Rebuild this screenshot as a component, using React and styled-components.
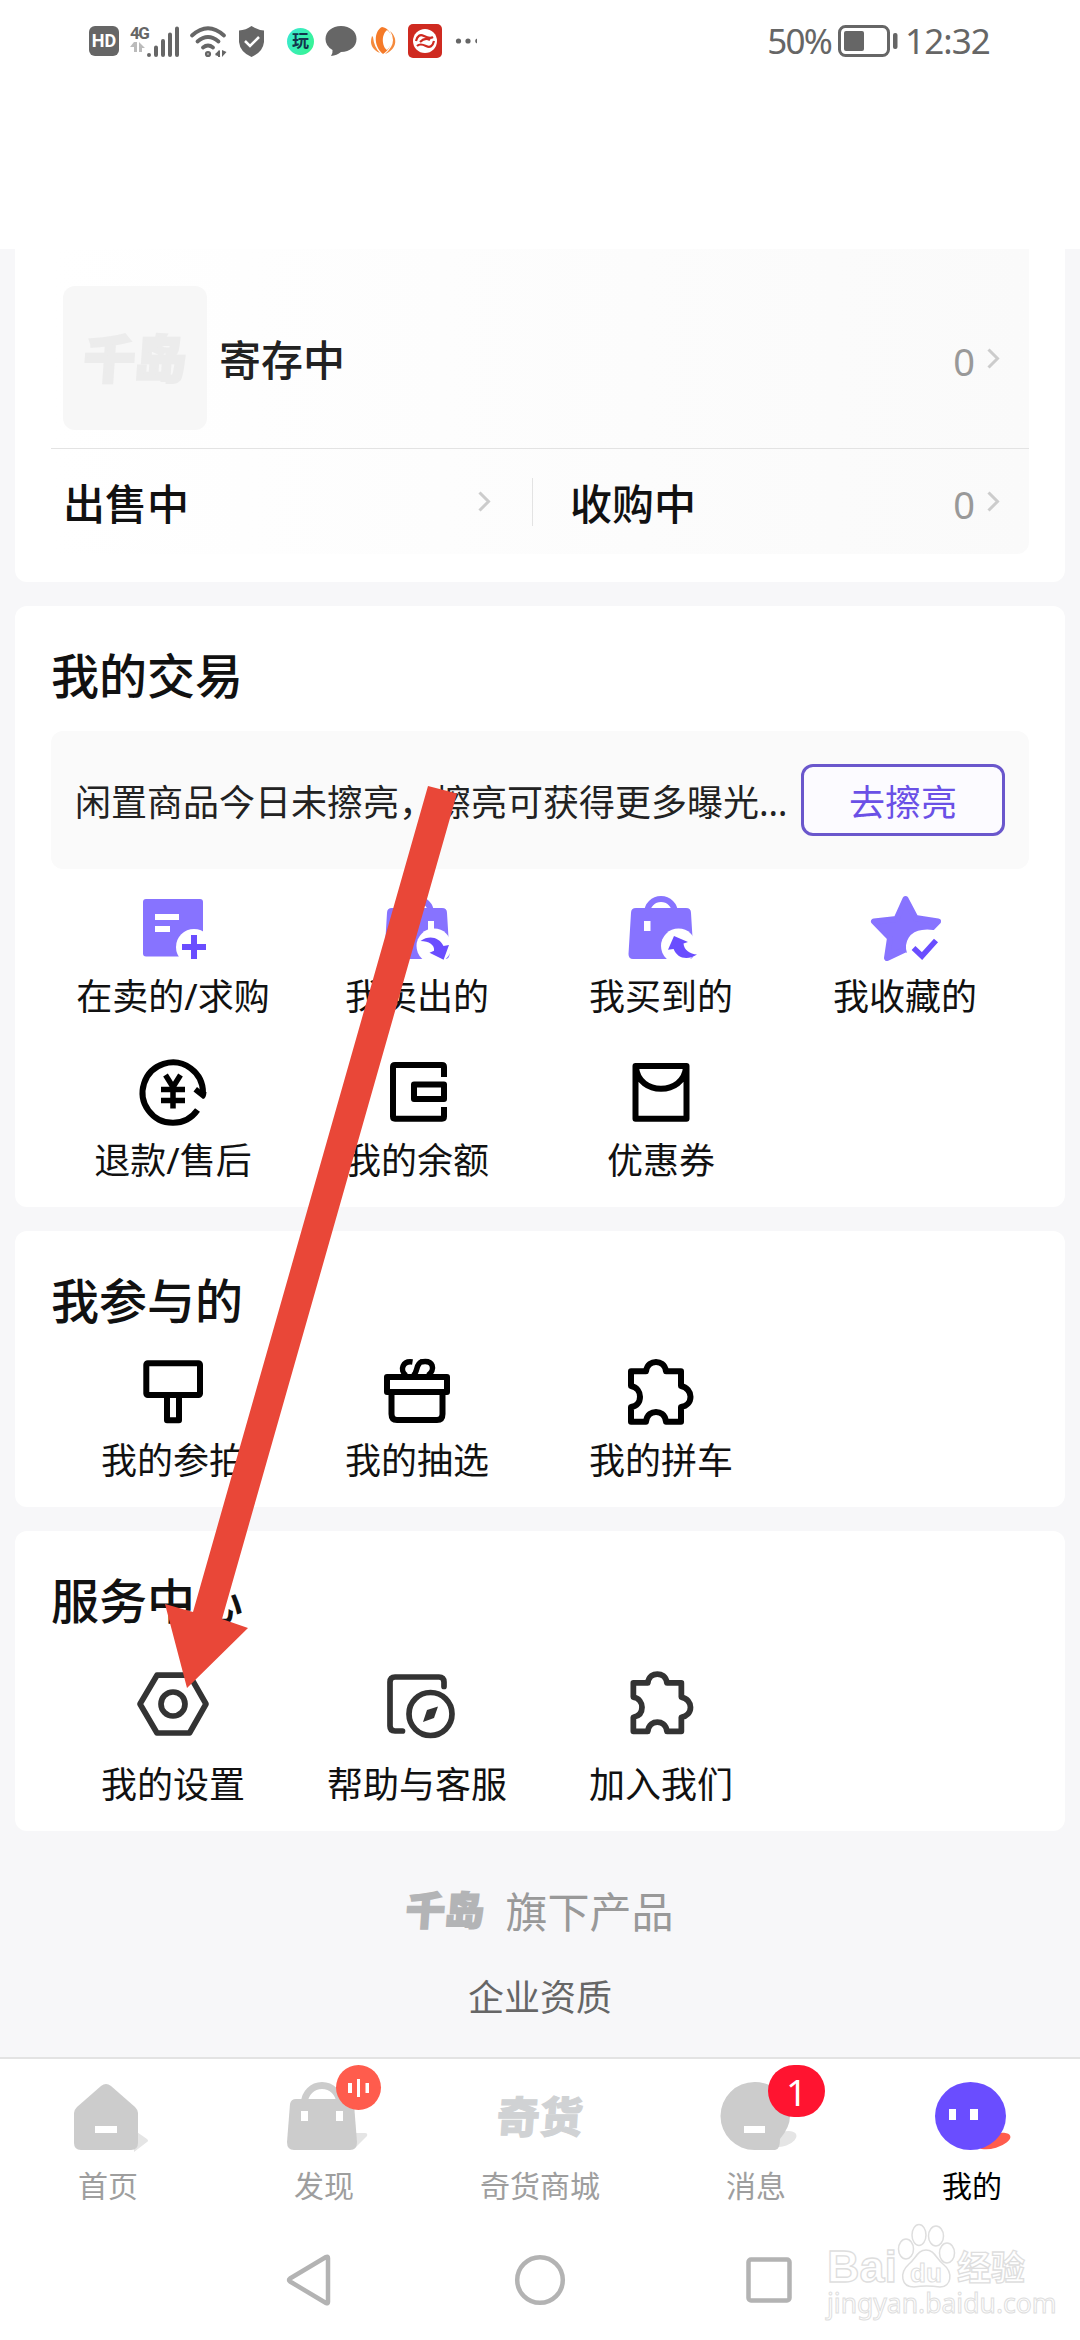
import React from 'react'
import styled, { createGlobalStyle } from 'styled-components'

const GlobalStyle = createGlobalStyle`
  * { box-sizing: border-box; }
  body {
    margin: 0;
    background: #fff;
    font-family: "Noto Sans", "Noto Sans CJK SC", sans-serif;
    color: #111;
  }
  svg { display: block; overflow: visible; flex: none; }
`

/* ---------- icons ---------- */

const Icon72 = ({ children }) => (
  <svg width="72" height="72" viewBox="0 0 72 72" fill="none">{children}</svg>
)

const SellingIcon = () => (
  <Icon72>
    <rect x="6" y="7" width="60" height="57.5" rx="3" fill="#8773ff" />
    <path d="M18 22h24v6H18zM18 34h15v6H18z" fill="#fff" />
    <circle cx="57" cy="55" r="18" fill="#fff" />
    <path d="M54 43h6v9h9v6h-9v9h-6v-9h-9v-6h9z" fill="#6a4dff" />
  </Icon72>
)

const SoldIcon = () => (
  <Icon72>
    <circle cx="36" cy="21" r="14" stroke="#8773ff" strokeWidth="6" />
    <path d="M11 16H61Q66 16 66 21L68.500 62Q68.500 67 64 67H8Q3.500 67 3.500 62L6 21Q6 16 11 16Z" fill="#8773ff" />
    <rect x="47" y="29" width="6" height="10" fill="#fff" />
    <circle cx="53" cy="54" r="17.500" fill="#fff" />
    <path d="M39.500 49C48 43 58 45 62.500 54L68 53L62.600 67.700L48.500 60.700L53 58.700C54 53 48 49 39.500 49Z" fill="#6a4dff" />
  </Icon72>
)

const BoughtIcon = () => (
  <Icon72>
    <circle cx="36" cy="21" r="14" stroke="#8773ff" strokeWidth="6" />
    <path d="M11 16H61Q66 16 66 21L68.500 62Q68.500 67 64 67H8Q3.500 67 3.500 62L6 21Q6 16 11 16Z" fill="#8773ff" />
    <rect x="19" y="29" width="6.500" height="10" fill="#fff" />
    <circle cx="53.500" cy="54" r="17.500" fill="#fff" />
    <path d="M49 44L63 50L58.500 51.500C59 58 65 62 72 62.500C62 69 52 66 48.600 57L43 57.700Z" fill="#6a4dff" />
  </Icon72>
)

const FavIcon = () => (
  <Icon72>
    <path d="M36.500 7L46.500 26L69 29.500L53 46L56 66L37 57L18 66L21 46L5 29.500L27.500 27Z" fill="#8773ff" stroke="#8773ff" strokeWidth="6" strokeLinejoin="round" />
    <path d="M53 38A17 17 0 0 0 38 61L40 76H78V38H64Q58 37 53 38Z" fill="#fff" />
    <path d="M44.500 56L53 64L67 48.500" stroke="#6a4dff" strokeWidth="5.500" />
  </Icon72>
)

const RefundIcon = () => (
  <Icon72>
    <path d="M60.500 54A30.200 30.200 0 1 1 66 37" stroke="#000" strokeWidth="6" />
    <path d="M60 31L56.500 35.500L66 43Q69 43 69.500 36L66 36Z" fill="#000" />
    <path d="M28.500 19L36 31L43.500 19M36 30V52.500M24 33.500H48M24 44.500H48" stroke="#000" strokeWidth="5.500" />
  </Icon72>
)

const BalanceIcon = () => (
  <Icon72>
    <path d="M63 21V11Q63 9 61 9H14Q12 9 12 11V60.500Q12 62.700 14 62.700H61Q63 62.700 63 60.500V51M33 28.500H63V43H33Z" stroke="#000" strokeWidth="6" strokeLinejoin="round" />
  </Icon72>
)

const CouponIcon = () => (
  <Icon72>
    <path d="M10.500 10H61.500V62.700H10.500ZM11 11C13 40 59 40 61 11" stroke="#000" strokeWidth="6" strokeLinejoin="round" />
  </Icon72>
)

const AuctionIcon = () => (
  <Icon72>
    <rect x="9.300" y="7.300" width="53.700" height="31.700" rx="1.500" stroke="#000" strokeWidth="6" />
    <path d="M30 40V64.300H42V40" stroke="#000" strokeWidth="6" strokeLinejoin="round" />
  </Icon72>
)

const DrawIcon = () => (
  <Icon72>
    <path d="M6 21H66V36H6ZM10.500 38V58Q10.500 64 16 64H56Q61.500 64 61.500 58V38" stroke="#000" strokeWidth="6" strokeLinejoin="round" />
    <path d="M31.500 6C22 4.500 18 14 25 19.500M39.500 6C53 3 54.500 14 47 19.500M32 19.500C37.500 16 34 8 41 5.700" stroke="#000" strokeWidth="5.500" />
  </Icon72>
)

const PuzzleIcon = ({ color = '#000', small }) => (
  <Icon72>
    <path
      transform={small ? 'translate(2.6 .3) scale(.96)' : undefined}
      d="M6 15.300H21C22 8 27 6 31 6C35 6 40 8 41 15.300H56V30C62 31 65.500 36 65.500 40.700C65.500 46 62 50 56 51V65.700H41C40 58 35 56 31 56C27 56 22 58 21 65.700H6V51C12 50 15 46 15 40.700C15 36 12 31 6 30Z"
      stroke={color}
      strokeWidth="6"
      strokeLinejoin="round"
    />
  </Icon72>
)

const SettingIcon = () => (
  <Icon72>
    <path d="M3 36L20 7.200H52.500L69 36L52.500 65H20Z" stroke="#333" strokeWidth="5.700" strokeLinejoin="round" />
    <circle cx="36" cy="36" r="12" stroke="#333" strokeWidth="5.700" />
  </Icon72>
)

const HelpIcon = () => (
  <Icon72>
    <path d="M63 18.500V14Q63 9 58 9H14Q9 9 9 14V58Q9 63 14 63H21.500" stroke="#333" strokeWidth="5.700" strokeLinecap="round" />
    <circle cx="49.500" cy="46" r="21.500" stroke="#333" strokeWidth="5.700" />
    <path d="M57 38.500L46 42L42 54L53 50Z" fill="#333" />
  </Icon72>
)

const Chevron = () => (
  <svg width="12" height="21" viewBox="0 0 12 21" fill="none">
    <path d="M1.500 1.500L10.500 10.500L1.500 19.500" stroke="#ccc" strokeWidth="3" />
  </svg>
)

/* ---------- status bar ---------- */

const StatusBar = styled.header`
  height: 249px;
  padding: 0 90px 0 89px;
  background: #fff;
  display: flex;
  justify-content: space-between;
  align-items: flex-start;
`
const StatusGroup = styled.div`
  height: 82px;
  display: flex;
  align-items: center;
  gap: ${(p) => p.$gap || 0}px;
  color: #666;
`
const HdBox = styled.div`
  width: 30px;
  height: 30px;
  border-radius: 6px;
  background: #666;
  color: #fff;
  font: 700 18px/30px "Roboto", sans-serif;
  text-align: center;
`
const Signal = styled.div`
  display: flex;
  align-items: flex-end;
  height: 32px;
`
const NetType = styled.div`
  width: 17px;
  height: 32px;
  font: 700 17px/17px "Roboto", sans-serif;
  letter-spacing: -1.5px;
`
const StatusText = styled.span`
  font-size: 35px;
  line-height: 40px;
  letter-spacing: ${(p) => p.$spacing}px;
`
const PlayBadge = styled.div`
  width: 27px;
  height: 27px;
  border-radius: 50%;
  background: linear-gradient(120deg, #3be8d8, #37f58a);
  color: #12344d;
  font-size: 17px;
  font-weight: 700;
  line-height: 26px;
  text-align: center;
`

const Status = () => (
  <StatusBar>
    <StatusGroup $gap={11}>
      <HdBox>HD</HdBox>
      <Signal>
        <NetType>
          4G
          <svg width="16" height="10" viewBox="0 0 16 10" fill="#bbb">
            <path d="M4 0H7V10H4V5H0ZM9 0L15 6H12V10H9Z" />
          </svg>
        </NetType>
        <svg width="32" height="31" viewBox="0 0 32 31" stroke="#666" strokeWidth="4" strokeLinecap="round">
          <path d="M2 29V29.100M9 21.500V29M16 15V29M23 8.500V29M30 2.500V29" />
        </svg>
      </Signal>
      <svg width="37" height="31" viewBox="0 0 37 31" fill="none" stroke="#666" strokeWidth="3.800" strokeLinecap="round">
        <path d="M2 9.500Q18 -5 34 9.500M7.500 15.500Q18 6.500 28.500 15.500M13 21.500Q18 17.500 23 21.500" />
        <circle cx="18" cy="28" r="1.200" />
        <path d="M25 29L29 24V31H30.500M32 24V31L36.500 26Z" fill="#666" stroke="none" />
        <path d="M30 24V31H28V28H25Z" fill="#666" stroke="none" />
      </svg>
      <svg width="27" height="31" viewBox="0 0 27 31" fill="none">
        <path d="M13.500 0Q20 4 26 4.500V16Q25 26 13.500 31Q2 26 1 16V4.500Q8 4 13.500 0Z" fill="#666" />
        <path d="M7 15L12 20L21 11" stroke="#fff" strokeWidth="2.500" />
      </svg>
      <svg width="0" height="1" />
      <PlayBadge>玩</PlayBadge>
      <svg width="32" height="30" viewBox="0 0 32 30">
        <path d="M16 0C25 0 31.500 5.500 31.500 13S25 26 16 26Q12 29.500 6 30Q8 27 7.500 24Q.5 20 .5 13C.5 5.500 7 0 16 0Z" fill="#666" />
      </svg>
      <svg width="29" height="28" viewBox="0 0 29 28">
        <path d="M14 0C6 4 5 19 15 27C27 20 25 1 14 0Z" fill="#f57a28" />
        <path d="M19 3C12 9 15 21 19 23C26 17 25 7 19 3Z" fill="#fff" />
        <path d="M22 4C31 12 28 23 17 27Q25 20 25 13Q25 8 22 4ZM4 9Q0 21 12 26Q6 20 5 10Z" fill="#f58a3c" />
      </svg>
      <svg width="34" height="34" viewBox="0 0 34 34" fill="none">
        <rect width="34" height="34" rx="5" fill="#cf2a20" />
        <circle cx="17" cy="17" r="12" fill="#fff" />
        <path d="M8 17Q10 9 16 12T25 13M26 17Q24 25 18 22T9 22M12 18Q17 13 22 16" stroke="#cf2a20" strokeWidth="2.200" />
      </svg>
      <svg width="24" height="6" viewBox="0 0 24 6" fill="#666">
        <circle cx="5.500" cy="3" r="2.600" />
        <circle cx="15" cy="3" r="2.600" />
        <path d="M24 .5A2.600 2.600 0 0 0 24 5.500Z" />
      </svg>
    </StatusGroup>
    <StatusGroup $gap={7}>
      <StatusText $spacing={-1.8}>50%</StatusText>
      <svg width="60" height="32" viewBox="0 0 60 32" fill="none">
        <rect x="1.500" y="1.500" width="49" height="29" rx="6" stroke="#666" strokeWidth="3" />
        <rect x="6" y="6" width="20" height="20" rx="2" fill="#666" />
        <rect x="55" y="8" width="4.500" height="16" rx="2" fill="#666" />
      </svg>
      <StatusText $spacing={-0.9}>12:32</StatusText>
    </StatusGroup>
  </StatusBar>
)

/* ---------- content ---------- */

const Content = styled.main`
  height: 1808px;
  padding: 0 15px;
  background: #f7f7f9;
  display: flex;
  flex-direction: column;
  gap: 24px;
`
const Card = styled.section`
  height: ${(p) => p.$height}px;
  padding: 0 36px;
  background: #fff;
  border-radius: ${(p) => (p.$flushTop ? '0 0 12px 12px' : '12px')};
  flex: none;
`
const Title = styled.h2`
  margin: 0;
  padding-top: 35px;
  font-size: 48px;
  font-weight: 500;
  line-height: 70px;
  color: #111;
`
const AssetPanel = styled.div`
  height: 305px;
  border-radius: 0 0 12px 12px;
  background: linear-gradient(90deg, #fff, #fafafa);
`
const AssetTop = styled.div`
  height: 200px;
  padding: 37px 30px 18px 12px;
  border-bottom: 1px solid #e3e3e3;
  display: flex;
  align-items: center;
`
const Thumb = styled.div`
  width: 144px;
  height: 144px;
  margin-right: 12px;
  border-radius: 12px;
  background: #f7f7f7;
  display: flex;
  align-items: center;
  justify-content: center;
`
const Brand = styled.span`
  font-size: ${(p) => p.$size}px;
  line-height: 1;
  font-weight: 900;
  color: ${(p) => p.$color};
  -webkit-text-stroke: ${(p) => p.$stroke}px ${(p) => p.$color};
  transform: skewX(-4deg);
`
const AssetBottom = styled.div`
  height: 105px;
  display: flex;
  align-items: center;
`
const AssetCell = styled.div`
  flex: ${(p) => (p.$first ? '0 0 482px' : '1')};
  height: 48px;
  padding: ${(p) => (p.$first ? '0 42px 0 12px' : '0 30px 0 37px')};
  border-right: ${(p) => (p.$first ? '1px solid #e3e3e3' : 'none')};
  display: flex;
  align-items: center;
`
const AssetName = styled.span`
  flex: 1;
  font-size: 42px;
  font-weight: 500;
  line-height: 48px;
  padding-top: 4px;
  color: ${(p) => (p.$soft ? '#222' : '#111')};
`
const Count = styled.span`
  margin-right: 12px;
  padding-top: 5px;
  font-size: 38px;
  line-height: 48px;
  color: #999;
`
const Notice = styled.div`
  height: 138px;
  margin-top: 20px;
  padding: 0 24px;
  border-radius: 12px;
  background: #fafafa;
  display: flex;
  align-items: center;
  justify-content: space-between;
  font-size: 36px;
  color: #222;
  white-space: nowrap;
`
const PolishButton = styled.button`
  width: 204px;
  height: 72px;
  padding: 0;
  border: 3px solid #6a57cc;
  border-radius: 12px;
  background: #fcfbff;
  font: inherit;
  color: #6a50e6;
`
const Grid = styled.div`
  display: grid;
  grid-template-columns: repeat(4, 244px);
  row-gap: 37px;
  margin-top: ${(p) => p.$top}px;
`
const Item = styled.div`
  display: flex;
  flex-direction: column;
  align-items: center;
  gap: ${(p) => p.$gap || 11}px;
  font-size: 36px;
  line-height: 44px;
  white-space: nowrap;
`
const Footer = styled.footer`
  padding-top: 24px;
  display: flex;
  flex-direction: column;
  align-items: center;
`
const Products = styled.div`
  height: 60px;
  display: flex;
  align-items: center;
  gap: 21px;
  font-size: 42px;
  color: #999;
`
const License = styled.div`
  margin-top: 35px;
  font-size: 36px;
  line-height: 48px;
  color: #666;
`

/* ---------- tabs and system keys ---------- */

const TabBar = styled.nav`
  height: 158px;
  border-top: 2px solid #e3e3e3;
  background: #fff;
  display: grid;
  grid-template-columns: repeat(5, 216px);
`
const Tab = styled.div`
  position: relative;
  display: flex;
  flex-direction: column;
  align-items: center;
  padding-top: 21px;
  font-size: 30px;
  line-height: 40px;
  color: ${(p) => (p.$active ? '#000' : '#9e9e9e')};
`
const TabIcon = styled.div`
  height: 72px;
  margin-bottom: 14px;
  display: flex;
  align-items: center;
  white-space: nowrap;
`
const VoiceBadge = styled.div`
  position: absolute;
  left: 120px;
  top: 6px;
  width: 45px;
  height: 45px;
  border-radius: 50%;
  background: #ff5c4d;
  display: flex;
  align-items: center;
  justify-content: center;
`
const CountBadge = styled.div`
  position: absolute;
  left: 120px;
  top: 6px;
  width: 57px;
  height: 52px;
  border-radius: 26px;
  background: #ff1430;
  color: #fff;
  font-size: 37px;
  line-height: 53px;
  text-align: center;
`
const SystemKeys = styled.div`
  position: relative;
  height: 125px;
  padding: 38px 285px 0;
  background: #fff;
  display: flex;
  justify-content: space-between;
`
const Watermark = styled.div`
  position: absolute;
  left: 827px;
  top: 8px;
  width: 200px;
  color: #fff;
  -webkit-text-stroke: 1.3px #dedede;
`
const WatermarkTop = styled.div`
  display: flex;
  align-items: flex-end;
  height: 65px;
  font: 700 45px/42px "Liberation Sans", "Noto Sans CJK SC", sans-serif;
`
const WatermarkCn = styled.span`
  font-size: 34px;
  line-height: 40px;
`
const WatermarkUrl = styled.div`
  font: 400 26.5px/30px "Noto Sans", sans-serif;
  -webkit-text-stroke: 1px #dedede;
`
const Arrow = styled.svg`
  position: absolute;
  left: 0;
  top: 0;
  pointer-events: none;
`
const Screen = styled.div`
  position: relative;
  width: 1080px;
  height: 2340px;
  overflow: hidden;
`

const trades = [
  ['在卖的/求购', SellingIcon],
  ['我卖出的', SoldIcon],
  ['我买到的', BoughtIcon],
  ['我收藏的', FavIcon],
  ['退款/售后', RefundIcon],
  ['我的余额', BalanceIcon],
  ['优惠券', CouponIcon],
]
const joined = [
  ['我的参拍', AuctionIcon],
  ['我的抽选', DrawIcon],
  ['我的拼车', PuzzleIcon],
]
const services = [
  ['我的设置', SettingIcon],
  ['帮助与客服', HelpIcon],
  ['加入我们', () => <PuzzleIcon color="#333" small />],
]

const Entries = ({ list, top, gap }) => (
  <Grid $top={top}>
    {list.map(([label, Glyph]) => (
      <Item key={label} $gap={gap}>
        <Glyph />
        <span>{label}</span>
      </Item>
    ))}
  </Grid>
)

const HomeGlyph = () => (
  <svg width="72" height="72" viewBox="0 0 72 72">
    <path d="M62 50L75 59Q77 61 75 62L62 72Z" fill="#e5e5e5" />
    <path d="M29 6Q34 2 39 6L63 27Q66 30 66 33V63Q66 70 59 70H9Q2 70 2 63V33Q2 30 5 27Z" fill="#ccc" />
    <rect x="23" y="46" width="22" height="7" fill="#fff" />
  </svg>
)
const BagGlyph = () => (
  <svg width="72" height="72" viewBox="0 0 72 72">
    <path d="M68 53H77Q80 53 79 56L66 69Z" fill="#e5e5e5" />
    <circle cx="34" cy="23" r="17.500" fill="none" stroke="#ccc" strokeWidth="7" />
    <path d="M8 19H60Q65 19 66 24L69 62Q69 70 62 70H6Q-1 70 -1 62L2 24Q3 19 8 19Z" fill="#ccc" />
    <path d="M13 31h7v10h-7zM48 31h7v10h-7z" fill="#fff" />
  </svg>
)
const MessageGlyph = () => (
  <svg width="72" height="72" viewBox="0 0 72 72">
    <ellipse cx="64" cy="59" rx="13" ry="7" transform="rotate(-20 64 59)" fill="#e5e5e5" />
    <path d="M34.500 2A35 34 0 0 1 70 36Q70 47 60 59Q60 70 55 70H34.500A34 34 0 0 1 34.500 2Z" fill="#ccc" />
    <rect x="24" y="46" width="21" height="7" fill="#fff" />
  </svg>
)
const MineGlyph = () => (
  <svg width="72" height="72" viewBox="0 0 72 72">
    <ellipse cx="58" cy="61" rx="17" ry="7" transform="rotate(-17 58 61)" fill="#ff5c4d" />
    <ellipse cx="34.500" cy="36" rx="35.500" ry="34" fill="#6a4dff" />
    <path d="M13 29h7v11h-7zM34 29h8v11h-8z" fill="#fff" />
  </svg>
)

export default function App() {
  return (
    <Screen>
      <GlobalStyle />
      <Status />
      <Content>
        <Card $height={333} $flushTop>
          <AssetPanel>
            <AssetTop>
              <Thumb>
                <Brand $size={51} $color="#ececec" $stroke={3}>千岛</Brand>
              </Thumb>
              <AssetName $soft>寄存中</AssetName>
              <Count>0</Count>
              <Chevron />
            </AssetTop>
            <AssetBottom>
              <AssetCell $first>
                <AssetName>出售中</AssetName>
                <Chevron />
              </AssetCell>
              <AssetCell>
                <AssetName>收购中</AssetName>
                <Count>0</Count>
                <Chevron />
              </AssetCell>
            </AssetBottom>
          </AssetPanel>
        </Card>

        <Card $height={601}>
          <Title>我的交易</Title>
          <Notice>
            <span>闲置商品今日未擦亮，擦亮可获得更多曝光…</span>
            <PolishButton>去擦亮</PolishButton>
          </Notice>
          <Entries list={trades} top={23} />
        </Card>

        <Card $height={276}>
          <Title>我参与的</Title>
          <Entries list={joined} top={20} />
        </Card>

        <Card $height={300}>
          <Title>服务中心</Title>
          <Entries list={services} top={32} gap={23} />
        </Card>

        <Footer>
          <Products>
            <Brand $size={39} $color="#b3b4b6" $stroke={2}>千岛</Brand>
            <span>旗下产品</span>
          </Products>
          <License>企业资质</License>
        </Footer>
      </Content>

      <TabBar>
        <Tab>
          <TabIcon><HomeGlyph /></TabIcon>
          首页
        </Tab>
        <Tab>
          <TabIcon><BagGlyph /></TabIcon>
          发现
          <VoiceBadge>
            <svg width="21" height="18" viewBox="0 0 21 18" fill="#fff">
              <path d="M0 4h4v10H0zM9 0h3v18H9zM17.500 4h3.500v10h-3.500z" />
            </svg>
          </VoiceBadge>
        </Tab>
        <Tab>
          <TabIcon>
            <Brand $size={43} $color="#d0d2d4" $stroke={1}>奇货</Brand>
          </TabIcon>
          奇货商城
        </Tab>
        <Tab>
          <TabIcon><MessageGlyph /></TabIcon>
          消息
          <CountBadge>1</CountBadge>
        </Tab>
        <Tab $active>
          <TabIcon><MineGlyph /></TabIcon>
          我的
        </Tab>
      </TabBar>

      <SystemKeys>
        <svg width="50" height="54" viewBox="0 0 50 54" fill="none">
          <path d="M43 5Q43 3 41 4L5 25.500Q3 27 5 28.500L41 50Q43 51 43 49Z" stroke="#b3b3b3" strokeWidth="4.500" strokeLinejoin="round" />
        </svg>
        <svg width="54" height="54" viewBox="0 0 54 54" fill="none">
          <circle cx="27" cy="27" r="22.800" stroke="#b3b3b3" strokeWidth="4.500" />
        </svg>
        <svg width="50" height="54" viewBox="0 0 50 54" fill="none">
          <rect x="3.500" y="6.500" width="41" height="41" rx="2.500" stroke="#b3b3b3" strokeWidth="4.500" />
        </svg>
        <Watermark>
          <WatermarkTop>
            <span>Bai</span>
            <svg width="60" height="65" viewBox="0 0 60 65" fill="#fff" stroke="#dedede" strokeWidth="1.500">
              <ellipse cx="9" cy="26" rx="7.500" ry="10" />
              <ellipse cx="22" cy="12" rx="7" ry="10.500" />
              <ellipse cx="39" cy="13" rx="7.500" ry="10" />
              <ellipse cx="50" cy="30" rx="7.500" ry="10" />
              <path d="M29 27C37 27 39 35 46 41C57 50 54 64 43 64Q29 62 17 64C4 64 2 50 12 41C19 35 21 27 29 27Z" />
              <text x="13" y="59" fontSize="26" fontWeight="700" fontFamily="Liberation Sans, sans-serif" strokeWidth="1">du</text>
            </svg>
            <WatermarkCn>经验</WatermarkCn>
          </WatermarkTop>
          <WatermarkUrl>jingyan.baidu.com</WatermarkUrl>
        </Watermark>
      </SystemKeys>

      {/* red pointer from the notice down to the settings entry */}
      <Arrow width="1080" height="2340" viewBox="0 0 1080 2340">
        <path d="M428 786L457 793.500L222 1619L248 1628L187 1688L165 1604L193 1612Z" fill="#e94738" />
      </Arrow>
    </Screen>
  )
}
